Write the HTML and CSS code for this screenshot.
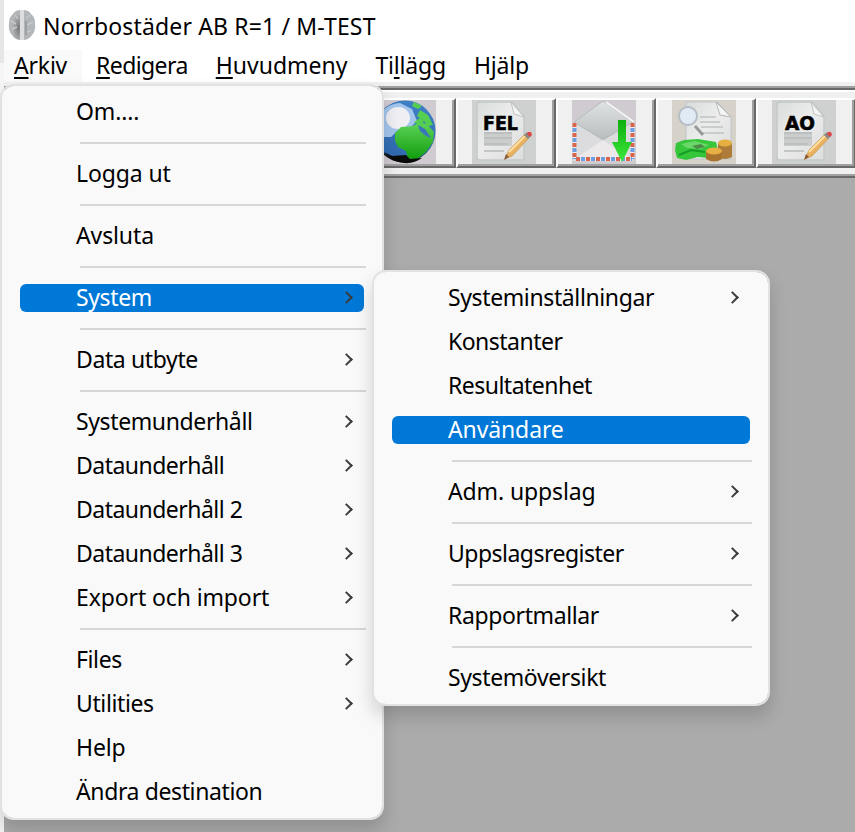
FILE: index.html
```html
<!DOCTYPE html>
<html lang="sv">
<head>
<meta charset="utf-8">
<title>Norrbostäder AB R=1 / M-TEST</title>
<link rel="stylesheet" href="styles.css">
</head>
<body>
<svg class="defs" width="0" height="0">
  <defs>
    <linearGradient id="paper" x1="0" y1="0" x2="1" y2="1"><stop offset="0" stop-color="#d9dcdc"/><stop offset=".45" stop-color="#ececec"/><stop offset="1" stop-color="#dcdddd"/></linearGradient>
    <linearGradient id="flap" x1="0" y1="0" x2="0" y2="1"><stop offset="0" stop-color="#dfe3e4"/><stop offset="1" stop-color="#b8bcbd"/></linearGradient>
    <linearGradient id="arrow" x1="0" y1="0" x2="0" y2="1"><stop offset="0" stop-color="#0fae0f"/><stop offset="1" stop-color="#3be83b"/></linearGradient>
    <linearGradient id="sea" x1="0" y1="0" x2="0" y2="1"><stop offset="0" stop-color="#3f80c4"/><stop offset="1" stop-color="#2f68ae"/></linearGradient>
    <linearGradient id="land" x1="0" y1="0" x2="0" y2="1"><stop offset="0" stop-color="#5fd45a"/><stop offset="1" stop-color="#0f9c0c"/></linearGradient>
    <radialGradient id="lobe-left" cx=".8" cy=".6"><stop offset="0" stop-color="#77797c"/><stop offset="1" stop-color="#b3b6b9"/></radialGradient>
    <symbol id="doc" viewBox="0 0 64 64">
      <path d="M8 2h32l12 14v44H8q-3 0-3-3V5q0-3 3-3z" fill="url(#paper)" stroke="#c6c9c9" stroke-width="1.500"/>
      <path d="M39 2l3 12 10 3z" fill="#f4f4f4" stroke="#bfc2c2"/>
      <path d="M12 32h28v14H12z" fill="#cbcccc"/>
      <path d="M12 33h28M12 38h28M12 44h24M12 51h20" stroke="#b8baba" stroke-width="1.600"/>
    </symbol>
    <symbol id="pencil" viewBox="0 0 64 64">
      <path d="M33 59l4-9L53 34l4 4-17 18z" fill="#e8b260" stroke="#c89a5a" stroke-width=".8"/>
      <path d="M37 52L53 36" stroke="#ffe0a0" stroke-width="2"/>
      <path d="M32 60l2-6 3 3z" fill="#8a5a38"/>
      <path d="M52 35l3-3 4 4-3 3z" fill="#888"/>
      <path d="M56 32h3l1 3-2 2-3-3z" fill="#e04444"/>
    </symbol>
  </defs>
</svg>
<div class="desktop">
  <div class="window">
    <header class="titlebar">
      <svg class="app-icon" viewBox="0 0 28 32">
        <path d="M13 1Q7 1 5 5 1 8 1 14q-1 8 3 12 3 5 9 5z" fill="url(#lobe-left)"/>
        <path d="M15 1q6 0 8 4 4 3 4 9 1 8-3 12-3 5-9 5z" fill="#b4b7ba"/>
        <path d="M12 1h4v30h-4z" fill="#dcdddf"/>
        <path d="M3 12l5 3M4 20l5-2M7 6l3 4M18 9l4-3M19 16l6-3M18 23l5-1" stroke="#c6c9cb" stroke-width="1.500"/>
        <path d="M18 12v14" stroke="#94979a" stroke-width="1.500"/>
      </svg>
      <span class="title">Norrbostäder AB R=1 / M-TEST</span>
    </header>
    <nav class="menubar">
      <span class="entry open"><u>A</u>rkiv</span>
      <span class="entry tight"><u>R</u>edigera</span>
      <span class="entry wide"><u>H</u>uvudmeny</span>
      <span class="entry">Ti<u>l</u>lägg</span>
      <span class="entry">Hjälp</span>
    </nav>
    <div class="toolbar">
      <div class="tool"></div><div class="tool"></div><div class="tool"></div>
      <div class="tool globe"><svg viewBox="0 0 64 64">
        <circle cx="32" cy="32" r="30.500" fill="#111"/>
        <circle cx="33" cy="31" r="30.500" fill="url(#sea)"/>
        <path d="M4 20Q12 4 28 3l12 6 5 12-8 8-12 2-6 6H3z" fill="#a4c6ec"/>
        <ellipse cx="26" cy="18" rx="12" ry="11" fill="#f0eff4"/>
        <path d="M23 33l6-6 12-1 6-4 8 2 7 8-1 10-7 10-10 8-8-1-2-8-8-4-3-6z" fill="url(#land)"/>
        <path d="M42 2l8 4-4 3-6-3zM48 10l8 5 5 10-5 1-5-6-6-4zM42 22l6-4 4 3-3 5z" fill="#55cf50"/>
        <path d="M46 25l7 4 6 9-5-2-6-5z" fill="#3a74bc"/>
        <path d="M12 52l8 4 14-1 4 4 12-1Q42 64 32 63 20 62 12 52z" fill="#0a0a0a"/>
      </svg></div>
      <div class="tool fel"><svg viewBox="0 0 64 64"><use href="#doc"/><text x="11" y="30" textLength="35" lengthAdjust="spacingAndGlyphs">FEL</text><use href="#pencil"/></svg></div>
      <div class="tool mail"><svg viewBox="0 0 64 64">
        <path d="M1 22L31 1l30 21v39H1z" fill="#dcdbdd"/>
        <path d="M2 22L31 1l30 21-30 18z" fill="url(#flap)" stroke="#b5babb"/>
        <path d="M34 2l28 20" stroke="#f5f5f5" stroke-width="2"/>
        <path d="M4 58l27-18 27 18z" fill="#ebe9e9"/>
        <path d="M2.500 23v36M60.500 23v36M4 59h56" stroke="#eee" stroke-width="4" fill="none"/>
        <path d="M2.500 23v36M60.500 23v36M4 59h56" stroke="#d8624a" stroke-width="4" stroke-dasharray="4 6" fill="none"/>
        <path d="M2.500 28v31M60.500 28v31M9 59h51" stroke="#6c9ee0" stroke-width="4" stroke-dasharray="4 6" fill="none"/>
        <path d="M46 20h8v22h6L50 62 40 42h6z" fill="url(#arrow)"/>
      </svg></div>
      <div class="tool money"><svg viewBox="0 0 64 64">
        <path d="M14 2h31l14 15v42H14z" fill="url(#paper)" stroke="#c0c5c8"/>
        <path d="M44 2l4 13 11 2z" fill="#f4f4f4" stroke="#b5b8b8"/>
        <path d="M28 17h16M28 22h20M29 27h22M30 33h22" stroke="#c0c3c5" stroke-width="1.600"/>
        <path d="M23 26l8 9" stroke="#96999a" stroke-width="3"/>
        <circle cx="16" cy="16" r="9" fill="#e0ebf6" stroke="#b5bec6" stroke-width="2"/>
        <path d="M4 43l8-3 14-1 18 3 2 8-10 8-10-1-12 3-9-2-2-8z" fill="#35c63c"/>
        <path d="M9 44l14-3 14 4-8 4-14-1z" fill="#6ad868"/><path d="M20 46l9-2 4 3-8 2z" fill="#4d8a45"/>
        <path d="M7 55l12-5 14 2" stroke="#159c24" stroke-width="2" fill="none"/>
        <path d="M46 43v14q7 4 14 0V43z" fill="#ae7c38"/><ellipse cx="53" cy="43" rx="7" ry="3.500" fill="#e5b040"/>
        <path d="M34 51v8q8 5 16 0v-8z" fill="#a8732f"/><ellipse cx="42" cy="51" rx="8" ry="3.500" fill="#e8b044"/>
      </svg></div>
      <div class="tool ao"><svg viewBox="0 0 64 64"><use href="#doc"/><text x="13" y="30" textLength="30" lengthAdjust="spacingAndGlyphs">AO</text><use href="#pencil"/></svg></div>
    </div>
    <main class="workspace"></main>
  </div>

  <div class="menu main-menu">
    <div class="item loose">Om....</div><hr>
    <div class="item loose">Logga ut</div><hr>
    <div class="item loose">Avsluta</div><hr>
    <div class="item sub active">System</div><hr>
    <div class="item sub">Data utbyte</div><hr>
    <div class="item sub">Systemunderhåll</div>
    <div class="item sub tight">Dataunderhåll</div>
    <div class="item sub tight">Dataunderhåll 2</div>
    <div class="item sub tight">Dataunderhåll 3</div>
    <div class="item sub loose">Export och import</div><hr>
    <div class="item sub">Files</div>
    <div class="item sub">Utilities</div>
    <div class="item loose">Help</div>
    <div class="item">Ändra destination</div>
  </div>
  <div class="menu sub-menu">
    <div class="item sub">Systeminställningar</div>
    <div class="item tight">Konstanter</div>
    <div class="item tight">Resultatenhet</div>
    <div class="item loose active">Användare</div><hr>
    <div class="item sub loose">Adm. uppslag</div><hr>
    <div class="item sub tight">Uppslagsregister</div><hr>
    <div class="item sub">Rapportmallar</div><hr>
    <div class="item">Systemöversikt</div>
  </div>
</div>
</body>
</html>
```
FILE: styles.css
```css
* { box-sizing: border-box; }
body { margin: 0; font: 23px/44px "Noto Sans", "Open Sans", sans-serif; color: #000; }
.defs { position: absolute; }
.desktop { position: relative; width: 855px; height: 832px; overflow: hidden; padding-left: 4px; background: linear-gradient(#e6e6e6 63px, #f5f5f5 63px); }
.window { height: 832px; display: flex; flex-direction: column; background: #fff; overflow: hidden; }
.titlebar { height: 50px; display: flex; align-items: center; padding: 0 0 0 4px; }
.app-icon { width: 28px; height: 32px; }
.title { margin-left: 7px; line-height: 50px; letter-spacing: 0.15px; white-space: nowrap; padding-top: 2px; }
.menubar { height: 32px; display: flex; line-height: 30px; }
.entry { padding: 0 14px 0 10px; margin-right: 4px; white-space: nowrap; letter-spacing: -0.2px; }
.entry.open { background: #f9f9f9; padding-right: 15px; }
.entry.tight { letter-spacing: -0.6px; }
.entry.wide { letter-spacing: 0; }
.entry u { text-decoration-thickness: 2px; text-underline-offset: 3px; text-decoration-skip-ink: none; }
.toolbar { height: 96px; flex: none; display: flex; padding: 16px 0 10px; margin-left: -2px; width: 860px;
  background: linear-gradient(#f0f0f0 4px, #a0a0a0 4px 6px, #696969 6px 8px, #fff 8px 10px, #f0f0f0 10px 92px, #a0a0a0 92px 94px, #696969 94px); }
.tool { flex: none; width: 100px; height: 70px; padding-left: 14px; border: 2px solid #696969; border-color: #fff #696969 #696969 #fff; box-shadow: inset -2px -2px #a0a0a0; }
.tool:first-child { margin-left: 54px; }
.tool svg { display: block; width: 64px; height: 64px; }
.tool text { font: 700 19px "DejaVu Sans", sans-serif; stroke: #000; stroke-width: .6px; }
.globe svg, .mail svg { background: #d0cbd0; }
.fel svg, .ao svg { background: #cfd1d0; }
.money svg { background: #d6d2ca; }
.workspace { flex: 1; background: #ababab; }
.menu { position: absolute; background: #f9f9f9; border: 2px solid #e2e2e2; border-radius: 14px; padding: 4px 0; background-clip: padding-box; box-shadow: 0 10px 18px rgba(0, 0, 0, .16); }
.main-menu { left: 0; top: 84px; width: 384px; height: 736px; }
.sub-menu { left: 372px; top: 270px; width: 398px; height: 436px; }
.item { position: relative; height: 44px; line-height: 42px; padding-left: 74px; letter-spacing: -0.38px; white-space: nowrap; z-index: 0; }
.item.loose { letter-spacing: -0.12px; }
.item.tight { letter-spacing: -0.52px; }
.item.active { color: #fff; }
.item.active::before { content: ""; position: absolute; z-index: -1; inset: 8px 18px; border-radius: 6px; background: #0078d7; }
.item.sub::after { content: ""; position: absolute; right: 31px; top: 17px; width: 7px; height: 7px; border: solid #3b3b3b; border-width: 2px 2px 0 0; transform: rotate(45deg); }
hr { height: 2px; margin: 8px 16px 8px 78px; border: 0; background: #d7d7d7; }
```
